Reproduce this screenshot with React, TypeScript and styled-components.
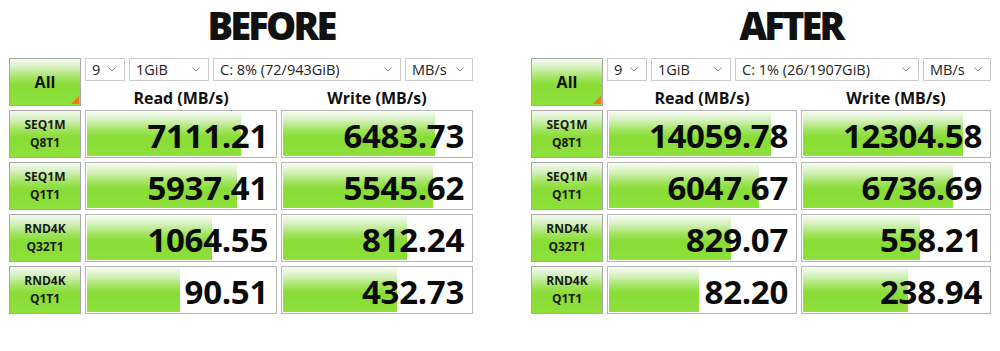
import * as React from 'react';
import styled, { createGlobalStyle } from 'styled-components';

const GlobalStyle = createGlobalStyle`
  body {
    margin: 0;
    background: #ffffff;
    font-family: 'Open Sans', 'DejaVu Sans', sans-serif;
    color: #111;
  }
`;

interface IResult {
  label: [string, string];
  read: string;
  write: string;
  readPct: number;
  writePct: number;
}

interface IPanel {
  title: string;
  width: number;
  drive: string;
  rows: IResult[];
}

const panels: IPanel[] = [
  {
    title: 'BEFORE',
    width: 464,
    drive: 'C: 8% (72/943GiB)',
    rows: [
      { label: ['SEQ1M', 'Q8T1'], read: '7111.21', write: '6483.73', readPct: 81, writePct: 80 },
      { label: ['SEQ1M', 'Q1T1'], read: '5937.41', write: '5545.62', readPct: 79, writePct: 79 },
      { label: ['RND4K', 'Q32T1'], read: '1064.55', write: '812.24', readPct: 66, writePct: 65 },
      { label: ['RND4K', 'Q1T1'], read: '90.51', write: '432.73', readPct: 49, writePct: 60 },
    ],
  },
  {
    title: 'AFTER',
    width: 460,
    drive: 'C: 1% (26/1907GiB)',
    rows: [
      { label: ['SEQ1M', 'Q8T1'], read: '14059.78', write: '12304.58', readPct: 86, writePct: 85 },
      { label: ['SEQ1M', 'Q1T1'], read: '6047.67', write: '6736.69', readPct: 80, writePct: 80 },
      { label: ['RND4K', 'Q32T1'], read: '829.07', write: '558.21', readPct: 65, writePct: 62 },
      { label: ['RND4K', 'Q1T1'], read: '82.20', write: '238.94', readPct: 48, writePct: 56 },
    ],
  },
];

const Page = styled.div`
  display: flex;
  gap: 58px;
  padding-left: 9px;
  padding-top: 6px;
`;

const Panel = styled.div<{ $width: number }>`
  width: ${({ $width }) => $width}px;
  display: flex;
  flex-direction: column;
`;

// big heading above each result set
const Title = styled.h1`
  margin: 0 0 14px;
  padding-left: 60px;
  text-align: center;
  font-size: 38px;
  line-height: 38px;
  font-weight: 800;
  letter-spacing: -2.8px;
  color: #111;
`;

const Grid = styled.div`
  display: grid;
  grid-template-columns: 72px 1fr 1fr;
  grid-auto-rows: 48px;
  gap: 4px;
`;

const greenFill = `linear-gradient(to bottom, #f4faef 0%, #d6f1bf 18%, #a3e462 40%, #88dc34 58%, #8ee13c 100%)`;

const AllButton = styled.div`
  position: relative;
  box-sizing: border-box;
  border: 1px solid #a9a9a9;
  background: ${greenFill};
  display: flex;
  align-items: center;
  justify-content: center;
  font-size: 16px;
  font-weight: 700;
  color: #111;
`;

const Corner = styled.span`
  position: absolute;
  right: 1px;
  bottom: 1px;
  width: 0;
  height: 0;
  border-left: 8px solid transparent;
  border-bottom: 8px solid #f0761c;
`;

const HeaderArea = styled.div`
  grid-column: 2 / 4;
  display: flex;
  flex-direction: column;
`;

const Controls = styled.div`
  display: flex;
  gap: 4px;
  height: 23px;
`;

const Select = styled.div<{ $width?: number }>`
  box-sizing: border-box;
  ${({ $width }) => ($width ? `width: ${$width}px;` : 'flex: 1;')}
  height: 23px;
  border: 1px solid #cdcdcd;
  background: #fff;
  display: flex;
  align-items: center;
  justify-content: space-between;
  padding: 0 8px 0 6px;
  font-size: 14.5px;
  color: #222;
  white-space: nowrap;
`;

const ColumnHeads = styled.div`
  flex: 1;
  display: grid;
  grid-template-columns: 1fr 1fr;
  gap: 4px;
  align-items: center;
`;

const ColumnHead = styled.div`
  text-align: center;
  font-size: 16px;
  font-weight: 700;
  padding-top: 6px;
`;

const RowLabel = styled.div`
  box-sizing: border-box;
  border: 1px solid #a9a9a9;
  background: ${greenFill};
  display: flex;
  flex-direction: column;
  align-items: center;
  justify-content: center;
  font-size: 12px;
  line-height: 18px;
  font-weight: 700;
  color: #1a1a1a;
`;

const Cell = styled.div`
  position: relative;
  box-sizing: border-box;
  border: 1px solid #b6b6b6;
  background: #fff;
  display: flex;
  align-items: center;
  justify-content: flex-end;
  padding: 3px 8px 0 0;
  overflow: hidden;
`;

const Bar = styled.div`
  position: absolute;
  left: 1px;
  top: 1px;
  bottom: 1px;
  background: ${greenFill};
`;

const Value = styled.span`
  position: relative;
  font-size: 33px;
  font-weight: 700;
  letter-spacing: -0.3px;
  color: #0a0a0a;
`;

const Chevron = () => (
  <svg width="8" height="5" viewBox="0 0 8 5">
    <polyline points="0.5,0.5 4,4 7.5,0.5" fill="none" stroke="#8a8a8a" strokeWidth="1" />
  </svg>
);

const ResultCell: React.FC<{ value: string; pct: number }> = ({ value, pct }) => (
  <Cell>
    <Bar style={{ width: `${pct}%` }} />
    <Value>{value}</Value>
  </Cell>
);

const Benchmark: React.FC<{ panel: IPanel }> = ({ panel }) => (
  <Panel $width={panel.width}>
    <Title>{panel.title}</Title>
    <Grid>
      <AllButton>
        All
        <Corner />
      </AllButton>
      <HeaderArea>
        <Controls>
          <Select $width={40}>
            9 <Chevron />
          </Select>
          <Select $width={80}>
            1GiB <Chevron />
          </Select>
          <Select>
            {panel.drive} <Chevron />
          </Select>
          <Select $width={68}>
            MB/s <Chevron />
          </Select>
        </Controls>
        <ColumnHeads>
          <ColumnHead>Read (MB/s)</ColumnHead>
          <ColumnHead>Write (MB/s)</ColumnHead>
        </ColumnHeads>
      </HeaderArea>
      {panel.rows.map((row) => (
        <React.Fragment key={row.label.join('-')}>
          <RowLabel>
            <span>{row.label[0]}</span>
            <span>{row.label[1]}</span>
          </RowLabel>
          <ResultCell value={row.read} pct={row.readPct} />
          <ResultCell value={row.write} pct={row.writePct} />
        </React.Fragment>
      ))}
    </Grid>
  </Panel>
);

const App: React.FC = () => (
  <>
    <GlobalStyle />
    <Page>
      {panels.map((p) => (
        <Benchmark key={p.title} panel={p} />
      ))}
    </Page>
  </>
);

export default App;
